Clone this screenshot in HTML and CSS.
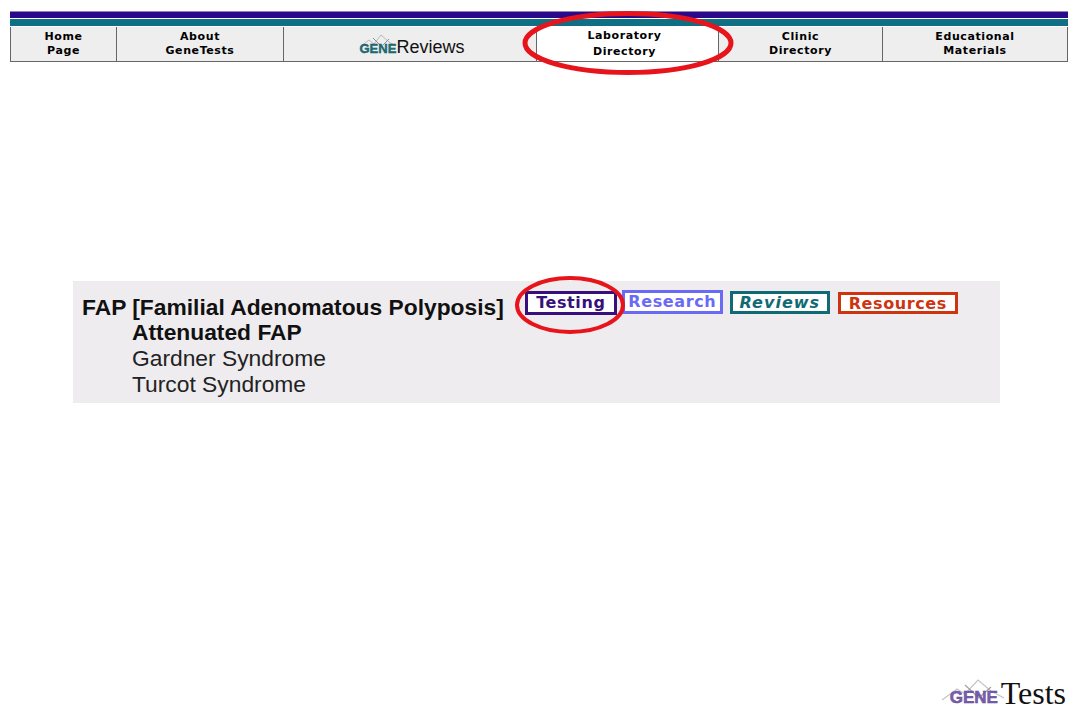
FILE: index.html
```html
<!DOCTYPE html>
<html>
<head>
    <title>GeneTests</title>
    <link rel="stylesheet" href="styles.css">
</head>
<body>

<div class="page">

    <!-- Top navigation -->
    <div class="top-nav">
        <div class="bar-purple"></div>
        <div class="bar-teal"></div>
        <div class="nav-row">
            <a class="nav-cell cell-home">Home<br>Page</a>
            <a class="nav-cell cell-about">About<br>GeneTests</a>
            <a class="nav-cell cell-reviews">
                <span class="logo-small">
                    <svg class="peaks-small" width="38" height="14" viewBox="0 0 38 14">
                        <path d="M1 13 L10 6 L15 10 L22 1 L30 8 L37 12" fill="none" stroke="#b9b9b9" stroke-width="1"/>
                        <path d="M14 4 L22 12 M24 11 L30 5" fill="none" stroke="#8d8d8d" stroke-width="1"/>
                    </svg>
                    <span class="gene-small">GENE</span>
                </span><span class="reviews-word">Reviews</span>
            </a>
            <a class="nav-cell cell-lab">Laboratory<br>Directory</a>
            <a class="nav-cell cell-clinic">Clinic<br>Directory</a>
            <a class="nav-cell cell-edu">Educational<br>Materials</a>
        </div>
        <svg class="ring ring-lab" width="214" height="66" viewBox="0 0 214 66">
            <ellipse cx="107" cy="33" rx="103" ry="29.5" fill="none" stroke="#e8141c" stroke-width="5"/>
        </svg>
    </div>

    <!-- Disease row -->
    <div class="panel">
        <div class="first-line">
            <span class="title">FAP [Familial Adenomatous Polyposis]</span>
            <div class="badges">
                <a class="badge badge-testing">Testing</a>
                <a class="badge badge-research">Research</a>
                <a class="badge badge-reviews">Reviews</a>
                <a class="badge badge-resources">Resources</a>
            </div>
        </div>
        <div class="sub-line sub-bold">Attenuated FAP</div>
        <div class="sub-line">Gardner Syndrome</div>
        <div class="sub-line">Turcot Syndrome</div>
        <svg class="ring ring-testing" width="112" height="60" viewBox="0 0 112 60">
            <ellipse cx="56" cy="30" rx="53" ry="27" fill="none" stroke="#e8141c" stroke-width="4"/>
        </svg>
    </div>

    <!-- Logo at the bottom -->
    <div class="footer-logo">
        <span class="logo-big">
            <svg class="peaks-big" width="64" height="24" viewBox="0 0 64 24">
                <path d="M1 22 L16 11 L24 16 L37 2 L50 13 L63 20" fill="none" stroke="#c4c4c4" stroke-width="1.2"/>
                <path d="M24 7 L38 20 M40 18 L50 9" fill="none" stroke="#a2a2a2" stroke-width="1.2"/>
            </svg>
            <span class="gene-big">GENE</span>
        </span><span class="tests-word">Tests</span>
    </div>

</div>

</body>
</html>
```

FILE: styles.css
```css
body {
    margin: 0;
    padding: 0;
    background-color: #fff;
    font-family: "Liberation Sans", Arial, sans-serif;
}

.page {
    height: 720px;
    box-sizing: border-box;
    padding: 11px 12px 0 10px;
    display: flex;
    flex-direction: column;
    overflow: hidden;
}

/* Top navigation */
.top-nav {
    position: relative;
    height: 51px;
    flex-shrink: 0;
}
.bar-purple {
    height: 6px;
    background-color: #2a0a8a;
    border-top: 1px solid #8f86b8;
}
.bar-teal {
    height: 7px;
    margin-top: 1px;
    background-color: #0f7085;
}
.nav-row {
    display: flex;
    height: 34px;
    margin-top: 1px;
    background-color: #eee;
    border-left: 1px solid #666;
    border-right: 1px solid #666;
    border-bottom: 1px solid #666;
    font-family: "DejaVu Sans", Verdana, sans-serif;
    font-size: 11px;
    font-weight: bold;
    line-height: 14px;
    letter-spacing: 0.6px;
    color: #000;
}
.nav-cell {
    display: flex;
    align-items: center;
    justify-content: center;
    text-align: center;
    box-sizing: border-box;
    border-right: 1px solid #666;
}
.cell-home { width: 106px; }
.cell-about { width: 167px; }
.cell-reviews {
    width: 253px;
    padding-top: 6px;
    padding-left: 4px;
    font-weight: normal;
    letter-spacing: 0;
}
.cell-lab {
    width: 182px;
    padding-right: 6px;
    line-height: 16px;
    background-color: #fff;
}
.cell-clinic { width: 164px; }
.cell-edu { flex-grow: 1; border-right: none; }

.logo-small {
    position: relative;
    display: inline-block;
    width: 37px;
    height: 22px;
}
.peaks-small {
    position: absolute;
    left: 0;
    top: -2px;
}
.gene-small {
    position: absolute;
    left: 0;
    top: 6px;
    font-family: "Liberation Sans", Arial, sans-serif;
    font-size: 13px;
    font-weight: bold;
    color: #1f6f78;
    -webkit-text-stroke: 0.4px #14555c;
}
.reviews-word {
    font-family: "Liberation Sans", Arial, sans-serif;
    font-size: 18px;
    color: #111;
}

/* Red hand drawn rings */
.ring {
    position: absolute;
    pointer-events: none;
}
.ring-lab {
    left: 511px;
    top: -1px;
}
.ring-testing {
    left: 441px;
    top: -6px;
}

/* Disease row */
.panel {
    position: relative;
    width: 927px;
    height: 122px;
    box-sizing: border-box;
    margin: 219px 0 0 63px;
    padding: 13px 0 0 9px;
    background-color: #efecef;
    flex-shrink: 0;
    font-size: 22.8px;
    line-height: 26px;
    color: #222;
}
.first-line {
    display: flex;
    align-items: flex-start;
    height: 25px;
}
.title {
    font-weight: bold;
    color: #111;
    white-space: nowrap;
}
.sub-line {
    padding-left: 50px;
    white-space: nowrap;
}
.sub-bold {
    font-weight: bold;
    color: #111;
}

.badges {
    display: flex;
    align-items: flex-start;
    margin-left: 21px;
    margin-top: -3px;
    font-family: "DejaVu Sans", Verdana, sans-serif;
    font-weight: bold;
    font-size: 16px;
    letter-spacing: 0.6px;
}
.badge {
    display: block;
    box-sizing: border-box;
    height: 24px;
    line-height: 18px;
    text-align: center;
    background-color: #fff;
    border: 3px solid;
}
.badge-testing {
    width: 92px;
    color: #37107c;
    border-color: #37107c;
}
.badge-research {
    width: 101px;
    margin-left: 5px;
    margin-top: -1px;
    color: #6a6af5;
    border-color: #6a6af5;
}
.badge-reviews {
    width: 100px;
    margin-left: 7px;
    height: 23px;
    line-height: 17px;
    font-style: italic;
    letter-spacing: 1px;
    color: #0f6a74;
    border-color: #0f6a74;
}
.badge-resources {
    width: 120px;
    margin-left: 8px;
    margin-top: 1px;
    height: 22px;
    line-height: 17px;
    color: #cf3410;
    border-color: #cf3410;
}

/* Logo at the bottom */
.footer-logo {
    display: flex;
    align-items: flex-end;
    justify-content: flex-end;
    margin-top: auto;
    margin-right: 2px;
    margin-bottom: 11px;
}
.logo-big {
    position: relative;
    display: inline-block;
    width: 60px;
    height: 29px;
}
.peaks-big {
    position: absolute;
    left: 0;
    top: -2px;
}
.gene-big {
    position: absolute;
    left: 9px;
    top: 9px;
    font-size: 17px;
    line-height: 18px;
    font-weight: bold;
    color: #7a5fb0;
    -webkit-text-stroke: 0.5px #5a4590;
}
.tests-word {
    font-family: "Liberation Serif", "Times New Roman", serif;
    font-size: 32px;
    line-height: 32px;
    color: #111;
}
```
